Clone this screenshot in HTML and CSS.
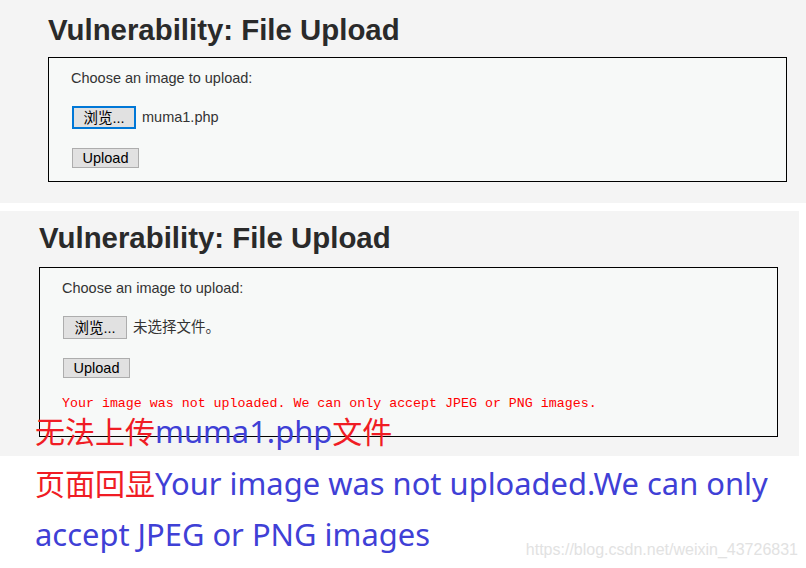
FILE: index.html
```html
<!DOCTYPE html>
<html lang="zh-CN">
<head>
<meta charset="utf-8">
<title>Vulnerability: File Upload</title>
<link rel="stylesheet" href="styles.css">
</head>
<body>
<main class="page">
  <section class="shot shot-first">
    <h1 class="shot-title">Vulnerability: File Upload</h1>
    <div class="vuln-box">
      <p class="label">Choose an image to upload:</p>
      <div class="file-row">
        <button type="button" class="btn btn-browse is-focused">浏览...</button>
        <span class="file-name">muma1.php</span>
      </div>
      <div class="upload-row">
        <button type="button" class="btn btn-upload">Upload</button>
      </div>
    </div>
  </section>

  <section class="shot shot-second">
    <h1 class="shot-title">Vulnerability: File Upload</h1>
    <div class="vuln-box vuln-box-error">
      <p class="label">Choose an image to upload:</p>
      <div class="file-row">
        <button type="button" class="btn btn-browse">浏览...</button>
        <span class="file-name">未选择文件。</span>
      </div>
      <div class="upload-row">
        <button type="button" class="btn btn-upload">Upload</button>
      </div>
      <pre class="error">Your image was not uploaded. We can only accept JPEG or PNG images.</pre>
    </div>
  </section>

  <div class="note">
    <p class="note-line"><span class="red">无法上传</span><span class="blue">muma1.php</span><span class="red">文件</span></p>
    <p class="note-line"><span class="red">页面回显</span><span class="blue">Your image was not uploaded.We can only</span></p>
    <p class="note-line"><span class="blue">accept JPEG or PNG images</span></p>
  </div>

  <div class="watermark">https://blog.csdn.net/weixin_43726831</div>
</main>
</body>
</html>
```

FILE: styles.css
```css
html, body {
  margin: 0;
  padding: 0;
  background: #ffffff;
}

body {
  font-family: "Liberation Sans", Arial, "Noto Sans CJK SC", sans-serif;
}

.page {
  position: relative;
  width: 806px;
  height: 568px;
  overflow: hidden;
}

.shot {
  background: #f4f4f4;
  box-sizing: border-box;
}

.shot-first {
  height: 203px;
  padding: 13px 0 0 48px;
}

.shot-second {
  width: 799px;
  margin-top: 8px;
  padding: 10px 0 19px 39px;
}

.shot-title {
  margin: 0;
  font-size: 29.4px;
  line-height: 34px;
  font-weight: bold;
  color: #2a2a2a;
}

.shot-first .shot-title {
  margin-bottom: 10px;
}

.shot-second .shot-title {
  margin-bottom: 12px;
}

.vuln-box {
  width: 739px;
  box-sizing: border-box;
  border: 1px solid #000;
  background: #f7f9f8;
  padding: 12px 0 13px 22px;
}

.vuln-box-error {
  padding-bottom: 25px;
}

.label {
  margin: 0 0 19px;
  font-size: 14.5px;
  line-height: 17px;
  color: #333;
}

.file-row {
  display: flex;
  align-items: center;
  gap: 6px;
  margin-bottom: 19px;
}

.upload-row {
  display: flex;
}

.btn {
  -webkit-appearance: none;
  appearance: none;
  box-sizing: border-box;
  margin: 0 0 0 1px;
  padding: 0;
  background: #e1e1e1;
  border: 1px solid #adadad;
  border-radius: 0;
  font-family: "Liberation Sans", Arial, "Noto Sans CJK SC", sans-serif;
  font-size: 14.5px;
  line-height: 18px;
  color: #000;
  display: flex;
  align-items: center;
  justify-content: center;
}

.btn-browse {
  width: 64px;
  height: 23px;
}

.btn-browse.is-focused {
  border-color: #0078d7;
  box-shadow: inset 0 0 0 1px #0078d7;
}

.btn-upload {
  width: 67px;
  height: 20px;
}

.file-name {
  font-size: 14.5px;
  line-height: 17px;
  color: #333;
}

.error {
  margin: 18px 0 0;
  font-family: "Liberation Mono", "Courier New", monospace;
  font-size: 13.3px;
  line-height: 16px;
  color: #ff0000;
}

.vuln-box-error .error {
  margin-bottom: -1px;
}

.note {
  position: relative;
  margin-top: -51px;
  padding-left: 35px;
  font-family: "Noto Sans", "Noto Sans CJK SC", sans-serif;
  font-size: 30px;
  line-height: 51px;
}

.note-line {
  margin: 0;
  white-space: nowrap;
}

.red {
  color: #f01c24;
  font-family: "Noto Sans CJK SC", sans-serif;
}

.blue {
  color: #3f40d6;
  font-size: 30.9px;
}

.watermark {
  position: absolute;
  top: 541px;
  right: 8px;
  font-family: "Liberation Sans", Arial, sans-serif;
  font-size: 16px;
  line-height: 18px;
  color: #e2e2e2;
}
```
